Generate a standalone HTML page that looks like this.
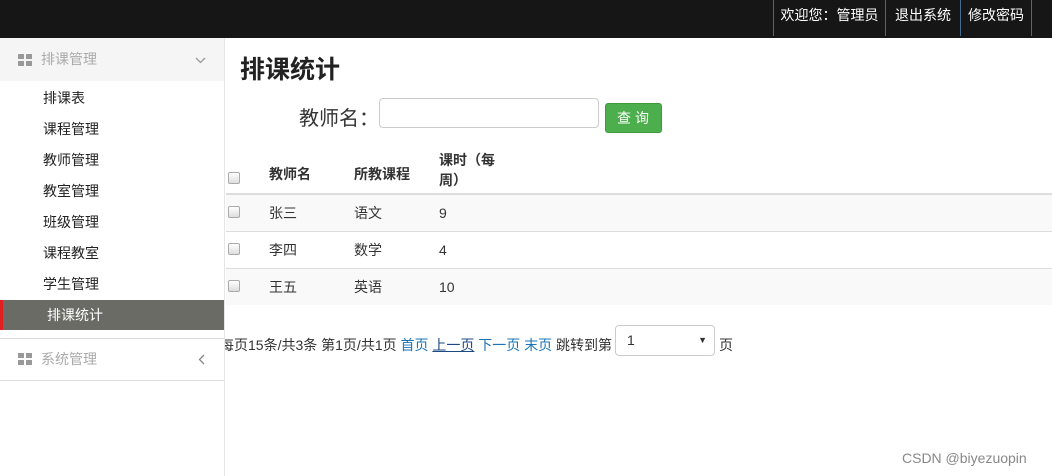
<!DOCTYPE html>
<html><head><meta charset="utf-8"><style>
*{margin:0;padding:0;box-sizing:border-box}
body{width:1052px;height:476px;overflow:hidden;background:#fff;font-family:"Liberation Sans","Noto Sans CJK SC",sans-serif;font-size:14px;color:#333;position:relative}
.top{position:absolute;left:0;top:0;width:1052px;height:38px;background:#161616}
.top a{position:absolute;top:0;height:36px;line-height:31px;color:#fff;font-size:14px;text-align:center;border-left:1px solid #3c6d8e}
.side{position:absolute;left:0;top:38px;width:225px;height:438px;background:#fff;border-right:1px solid #e6e6e6;z-index:2}
.grp{height:43px;background:#f5f5f5;position:relative;color:#aaa;font-size:14px;line-height:43px;padding-left:41px}
.ic{position:absolute;left:18px;top:16px;width:14px;height:12px;display:grid;grid-template-columns:6px 6px;grid-template-rows:5px 5px;gap:2px}
.ic i{background:#999}
.it{position:absolute;left:43px;font-size:14px;color:#222}
table{border-collapse:collapse;width:826px;position:absolute;left:226px;top:145px}
td{font-size:14px;color:#333}
.cb{display:inline-block;width:12px;height:12px;border:1px solid #aaa;border-radius:2px;background:linear-gradient(#fff,#ddd)}
</style></head><body>
<div class="top">
<a style="left:773px;width:112px">欢迎您：管理员</a>
<a style="left:885px;width:75px">退出系统</a>
<a style="left:960px;width:72px;border-right:1px solid #3c6d8e">修改密码</a>
</div>
<div class="side">
<div class="grp"><div class="ic"><i></i><i></i><i></i><i></i></div>排课管理<svg style="position:absolute;left:195px;top:19px" width="11" height="7" viewBox="0 0 11 7"><path d="M1 1 L5.5 5.5 L10 1" fill="none" stroke="#999" stroke-width="1.3"/></svg></div>
<div class="it" style="top:50px">排课表</div>
<div class="it" style="top:81px">课程管理</div>
<div class="it" style="top:112px">教师管理</div>
<div class="it" style="top:143px">教室管理</div>
<div class="it" style="top:174px">班级管理</div>
<div class="it" style="top:205px">课程教室</div>
<div class="it" style="top:236px">学生管理</div>
<div style="position:absolute;left:0;top:262px;width:224px;height:30px;background:#6b6b65;border-left:3px solid #e02020;color:#fff;line-height:30px;padding-left:44px">排课统计</div>
<div style="position:absolute;left:0;top:300px;width:224px;height:43px;border-top:1px solid #ddd;border-bottom:1px solid #ddd;color:#aaa;line-height:41px;padding-left:41px">
<div class="ic" style="top:14px"><i></i><i></i><i></i><i></i></div>系统管理<svg style="position:absolute;left:198px;top:15px" width="7" height="11" viewBox="0 0 7 11"><path d="M6 1 L1.5 5.5 L6 10" fill="none" stroke="#888" stroke-width="1.3"/></svg></div>
</div>
<div style="position:absolute;left:240px;top:50px;font-size:25px;font-weight:bold;color:#222">排课统计</div>
<div style="position:absolute;left:299px;top:102px;font-size:20px;color:#333">教师名：</div>
<div style="position:absolute;left:379px;top:98px;width:220px;height:30px;border:1px solid #ccc;border-radius:4px"></div>
<div style="position:absolute;left:605px;top:103px;width:57px;height:30px;background:#4cae4c;border:1px solid #3d9a3d;border-radius:3px;color:#fff;font-size:14px;line-height:28px;text-align:center;letter-spacing:4px;padding-left:3px">查询</div>
<table>
<tr style="height:49px;border-bottom:2px solid #ddd"><td style="width:43px;padding-left:2px;vertical-align:bottom;padding-bottom:6px"><span class="cb"></span></td><td style="width:85px;font-weight:bold;vertical-align:bottom;padding-bottom:9px">教师名</td><td style="width:85px;font-weight:bold;vertical-align:bottom;padding-bottom:9px">所教课程</td><td style="font-weight:bold;line-height:20px;padding-top:2px">课时（每<br>周）</td></tr>
<tr style="height:37px;background:#f9f9f9;border-bottom:1px solid #ddd"><td style="padding-left:2px"><span class="cb"></span></td><td>张三</td><td>语文</td><td>9</td></tr>
<tr style="height:37px;border-bottom:1px solid #ddd"><td style="padding-left:2px"><span class="cb"></span></td><td>李四</td><td>数学</td><td>4</td></tr>
<tr style="height:37px;background:#f9f9f9"><td style="padding-left:2px"><span class="cb"></span></td><td>王五</td><td>英语</td><td>10</td></tr>
</table>
<div style="position:absolute;left:220px;top:335px;font-size:14px;color:#333;white-space:nowrap">每页15条/共3条 第1页/共1页 <span style="color:#1a75b8">首页</span> <span style="color:#1a4a80;text-decoration:underline">上一页</span> <span style="color:#1a75b8">下一页</span> <span style="color:#1a75b8">末页</span> 跳转到第</div>
<div style="position:absolute;left:615px;top:325px;width:100px;height:31px;border:1px solid #ccc;border-radius:4px;padding-left:11px;line-height:29px;font-size:14px">1<span style="position:absolute;right:7px;top:0;font-size:9px">&#9660;</span></div>
<div style="position:absolute;left:719px;top:335px;font-size:14px">页</div>
<div style="position:absolute;left:902px;top:450px;font-size:14px;color:#888">CSDN @biyezuopin</div>
</body></html>
